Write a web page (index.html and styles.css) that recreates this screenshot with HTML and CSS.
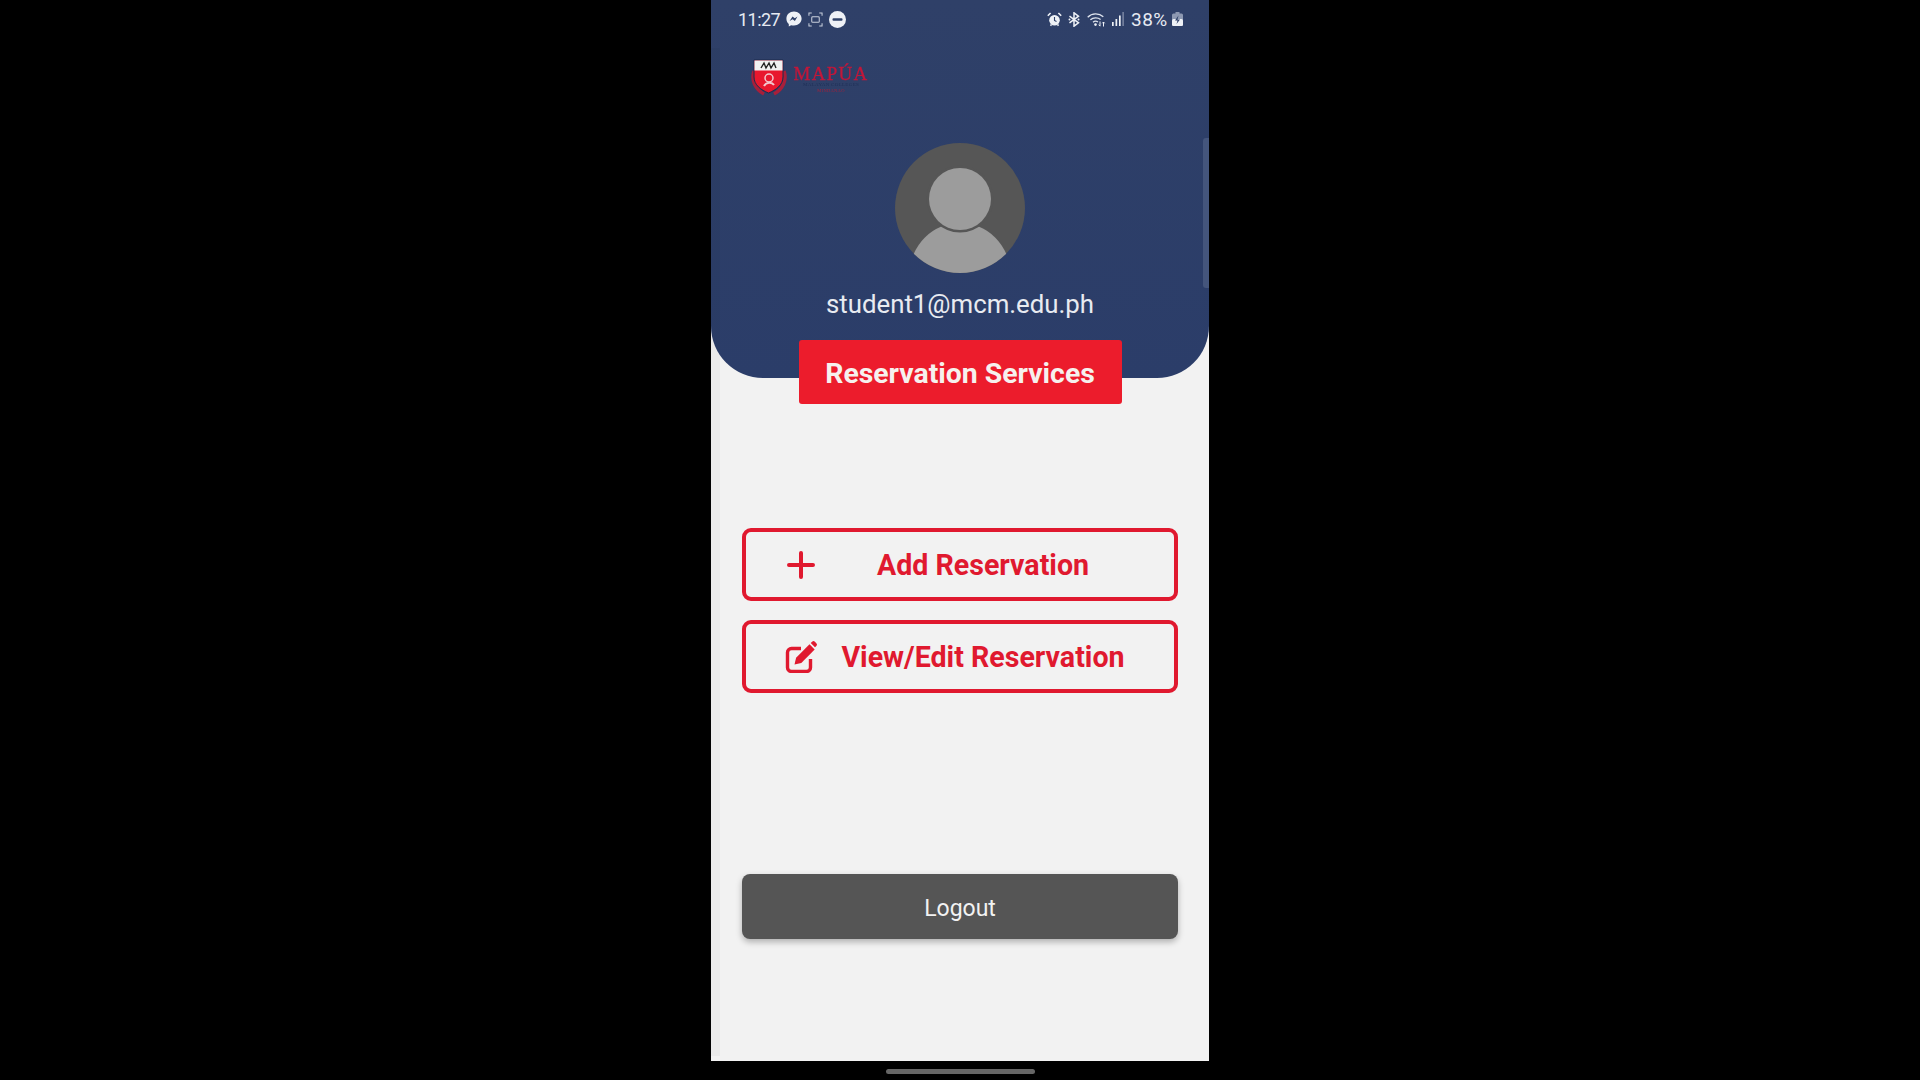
FILE: index.html
```html
<!DOCTYPE html>
<html lang="en">
<head>
<meta charset="utf-8">
<title>Reservation Services</title>
<link rel="stylesheet" href="styles.css">
</head>
<body>
<div class="phone">
  <header class="hero">
    <div class="status">
      <div class="status-group">
        <span class="time">11:27</span>
        <svg class="si msg" viewBox="0 0 16 16"><path fill="#eef1f6" d="M8 .5C3.700.5.400 3.600.400 7.700c0 2.100.9 4 2.400 5.300v2.500l2.300-1.300c.9.300 1.900.4 2.900.4 4.300 0 7.600-3.100 7.600-7S12.300.5 8 .5z"/><path fill="#2e4068" d="M3.600 9.900l2.900-4.300 2.300 1.700 2.700-1.700-2.600 4.300-2.300-1.700z"/></svg>
        <svg class="si shot" viewBox="0 0 16 16"><g fill="none" stroke="#c9cfdc" stroke-width="1.100"><path d="M1 4V1h3M12 1h3v3M15 12v3h-3M4 15H1v-3"/><rect x="4" y="5" width="8" height="6" rx="1"/></g></svg>
        <svg class="si dnd" viewBox="0 0 17 17"><circle cx="8.500" cy="8.500" r="8.500" fill="#eef1f6"/><rect x="3.500" y="7.200" width="10" height="2.600" rx="1" fill="#2e4068"/></svg>
      </div>
      <div class="status-group right">
        <svg class="si alarm" viewBox="0 0 15 15"><circle cx="7.500" cy="8.200" r="5.300" fill="#eef1f6"/><path d="M.8 3.800L3.600 1M14.200 3.800L11.400 1M3.500 13.800l1-1.400M11.500 13.800l-1-1.400" stroke="#eef1f6" stroke-width="1.600" fill="none"/><path d="M7.500 5v3.400l2 1" stroke="#2e4068" stroke-width="1.100" fill="none"/></svg>
        <svg class="si bt" viewBox="0 0 12 15"><path d="M1.500 4.200l9 6.600-4.500 3.400V.8l4.500 3.400-9 6.600" stroke="#eef1f6" stroke-width="1.500" fill="none"/><circle cx="1.500" cy="7.500" r="1" fill="#eef1f6"/><circle cx="10.500" cy="7.500" r="1" fill="#eef1f6"/></svg>
        <svg class="si wifi" viewBox="0 0 19 15"><g fill="none" stroke="#dfe4ee" stroke-width="1.300"><path d="M.7 5.200C5 .9 12 .9 16.300 4.800"/><path d="M3.400 7.800C6.300 5.200 10.700 5.200 13.600 7.400"/><path d="M6 10.200c1.500-1.200 3.500-1.200 5-.2"/></g><circle cx="8.500" cy="12.600" r="1.300" fill="#eef1f6"/><path d="M13 9.500v4.500M11.700 12.700l1.300 1.500M16.500 14.500V10M15.300 11.300l1.200-1.300 1.200 1.300" stroke="#eef1f6" stroke-width="1" fill="none"/></svg>
        <svg class="si signal" viewBox="0 0 12 14"><rect x="0" y="10" width="1.700" height="4" fill="#eef1f6"/><rect x="3.500" y="7" width="1.700" height="7" fill="#eef1f6"/><rect x="7" y="3.500" width="1.700" height="10.500" fill="#eef1f6"/><rect x="10.500" y="0" width="1.200" height="14" fill="#8d98b1"/></svg>
        <span class="batt-text">38%</span>
        <svg class="si batt" viewBox="0 0 11 14"><rect x="3.500" y="0" width="4" height="2" fill="#8d98b1"/><rect x="0" y="1.500" width="11" height="12.500" rx="1.500" fill="#8d98b1"/><rect x="0" y="7" width="11" height="7" rx="1.500" fill="#eef1f6"/><path d="M6.500 3.500L3 8.500h2.500L4.500 12 8 7.500H5.500z" fill="#2e4068"/></svg>
      </div>
    </div>
    <div class="logo">
      <svg class="crest" viewBox="0 0 42 38">
        <path d="M6 12c-3 9 1 18 10 23M36 12c3 9-1 18-10 23" fill="none" stroke="#a81f3a" stroke-width="3.500"/>
        <path d="M6 1h29v17c0 8-7 13-14.500 16C13 31 6 26 6 18z" fill="#e8182e" stroke="#1c2b4d" stroke-width="1"/>
        <rect x="6.500" y="1.500" width="28" height="10" fill="#f1f1f1"/>
        <path d="M13 9l3-5 2 5 3-5 2 5 3-5 2 5" fill="none" stroke="#222" stroke-width="1.400"/>
        <circle cx="21" cy="19" r="4" fill="none" stroke="#f3c9cf" stroke-width="1.500"/>
        <path d="M16 27c2-4 8-4 10-1" fill="none" stroke="#f3c9cf" stroke-width="2"/>
      </svg>
      <div class="logo-text">
        <span class="logo-name">MAPÚA</span>
        <span class="logo-sub">MALAYAN COLLEGES</span>
        <span class="logo-place">MINDANAO</span>
      </div>
    </div>
    <svg class="avatar" viewBox="0 0 130 130">
      <defs><clipPath id="avatar-clip"><circle cx="65" cy="65" r="65"/></clipPath></defs>
      <circle cx="65" cy="65" r="65" fill="#565656"/>
      <g clip-path="url(#avatar-clip)">
        <ellipse cx="65" cy="130" rx="50" ry="50" fill="#9c9c9c"/>
        <circle cx="65" cy="56" r="33.500" fill="#565656"/>
        <circle cx="65" cy="56" r="31" fill="#9c9c9c"/>
      </g>
    </svg>
    <p class="email">student1@mcm.edu.ph</p>
    <h1 class="title">Reservation Services</h1>
  </header>
  <main class="actions">
    <button class="action first">
      <svg class="action-icon" viewBox="0 0 32 32"><path d="M16 4v24M4 16h24" stroke="#e0192f" stroke-width="4" stroke-linecap="round" fill="none"/></svg>
      <span class="action-label">Add Reservation</span>
    </button>
    <button class="action">
      <svg class="action-icon" viewBox="0 0 32 32"><path d="M16 7.500H6.500A4 4 0 0 0 2.500 11.500v15a4 4 0 0 0 4 4h15a4 4 0 0 0 4-4V18" fill="none" stroke="#e0192f" stroke-width="3.400"/><path d="M9.500 23.500l1.600-6.800L24.500 3.300l5.200 5.200-13.400 13.400z" fill="#e0192f"/><path d="M25.700 2.100l1.400-1.300a2 2 0 0 1 2.800 0l1.400 1.400a2 2 0 0 1 0 2.800L30 6.300z" fill="#e0192f"/></svg>
      <span class="action-label">View/Edit Reservation</span>
    </button>
    <button class="logout">Logout</button>
  </main>
  <div class="scroll-thumb"></div>
  <div class="edge-strip"></div>
</div>
<div class="nav-area"><div class="home-bar"></div></div>
</body>
</html>
```

FILE: styles.css
```css
* { box-sizing: border-box; }
html, body { margin: 0; height: 100%; }
body {
  background: #000;
  display: flex;
  flex-direction: column;
  align-items: center;
  overflow: hidden;
  font-family: Roboto, "Liberation Sans", sans-serif;
}
.phone {
  position: relative;
  width: 498px;
  height: 1061px;
  background: #f2f2f2;
  flex: none;
}
.hero {
  height: 378px;
  background: linear-gradient(#2f4068, #2b3d69);
  border-radius: 0 0 52px 52px;
  display: flex;
  flex-direction: column;
  align-items: center;
}
.status {
  align-self: stretch;
  flex: none;
  height: 38px;
  padding: 0 26px 0 27px;
  display: flex;
  justify-content: space-between;
  align-items: center;
  color: #e6eaf2;
}
.status-group { display: flex; align-items: center; }
.si { display: block; flex: none; }
.time { font-size: 18px; width: 40px; letter-spacing: -.55px; white-space: nowrap; }
.msg { width: 16px; height: 16px; margin-left: 8px; }
.shot { width: 15px; height: 15px; margin-left: 6px; }
.dnd { width: 17px; height: 17px; margin-left: 6px; }
.alarm { width: 15px; height: 15px; }
.bt { width: 12px; height: 15px; margin-left: 6px; }
.wifi { width: 19px; height: 15px; margin-left: 7px; }
.signal { width: 12px; height: 14px; margin-left: 6px; }
.batt-text { font-size: 19px; margin-left: 7px; width: 38px; letter-spacing: .45px; white-space: nowrap; }
.batt { width: 11px; height: 14px; margin-left: 3px; }
.logo {
  align-self: flex-start;
  flex: none;
  margin: 21px 0 0 37px;
  height: 37px;
  display: flex;
  align-items: flex-start;
  filter: blur(0.5px);
}
.crest { width: 42px; height: 38px; flex: none; }
.logo-text {
  display: flex;
  flex-direction: column;
  align-items: center;
  margin: 6px 0 0 5px;
  width: 72px;
  font-family: "Liberation Serif", serif;
  line-height: 1;
}
.logo-name { color: #c3173a; font-size: 19px; letter-spacing: 1.300px; line-height: 17px; -webkit-text-stroke: .3px #c3173a; }
.logo-sub { color: #1f2f57; font-size: 5px; letter-spacing: .3px; line-height: 6px; white-space: nowrap; }
.logo-place { color: #a81f3a; font-size: 4.500px; line-height: 5px; letter-spacing: .3px; }
.avatar { width: 130px; height: 130px; margin-top: 47px; flex: none; display: block; }
.email {
  margin: 16px 0 0;
  flex: none;
  height: 30px;
  line-height: 30px;
  font-size: 25.800px;
  color: #e8ebf1;
}
.title {
  margin: 21px 0 0;
  padding-top: 3px;
  width: 323px;
  height: 64px;
  flex: none;
  background: #ec1c2c;
  border-radius: 3px;
  color: #f6f1ee;
  font-size: 28.400px;
  font-weight: 700;
  line-height: 61px;
  text-align: center;
}
.actions {
  padding: 150px 31px 0;
  display: flex;
  flex-direction: column;
}
.action {
  height: 73px;
  margin-top: 19px;
  padding: 0 25px 0 39px;
  display: flex;
  align-items: center;
  background: transparent;
  border: 4px solid #e0192f;
  border-radius: 9px;
  font-family: inherit;
  color: #e0192f;
}
.action.first { margin-top: 0; }
.action-icon { width: 32px; height: 32px; flex: none; }
.action-label {
  flex: 1;
  text-align: center;
  font-size: 28.600px;
  font-weight: 700;
}
.logout {
  height: 65px;
  margin-top: 181px;
  padding-top: 5px;
  border: none;
  border-radius: 8px;
  background: #555;
  color: #f2f2f2;
  font-family: inherit;
  font-size: 23px;
  box-shadow: 0 3px 6px rgba(0, 0, 0, .28);
}
.scroll-thumb {
  position: absolute;
  right: 0;
  top: 138px;
  width: 6px;
  height: 150px;
  background: #44557c;
  border-radius: 3px 0 0 3px;
}
.edge-strip {
  position: absolute;
  left: 0;
  top: 48px;
  bottom: 5px;
  width: 9px;
  background: rgba(0, 0, 0, .03);
}
.nav-area {
  width: 498px;
  flex: 1;
  display: flex;
  justify-content: center;
  padding-top: 8px;
}
.home-bar {
  width: 149px;
  height: 5px;
  border-radius: 3px;
  background: #666;
}
```
